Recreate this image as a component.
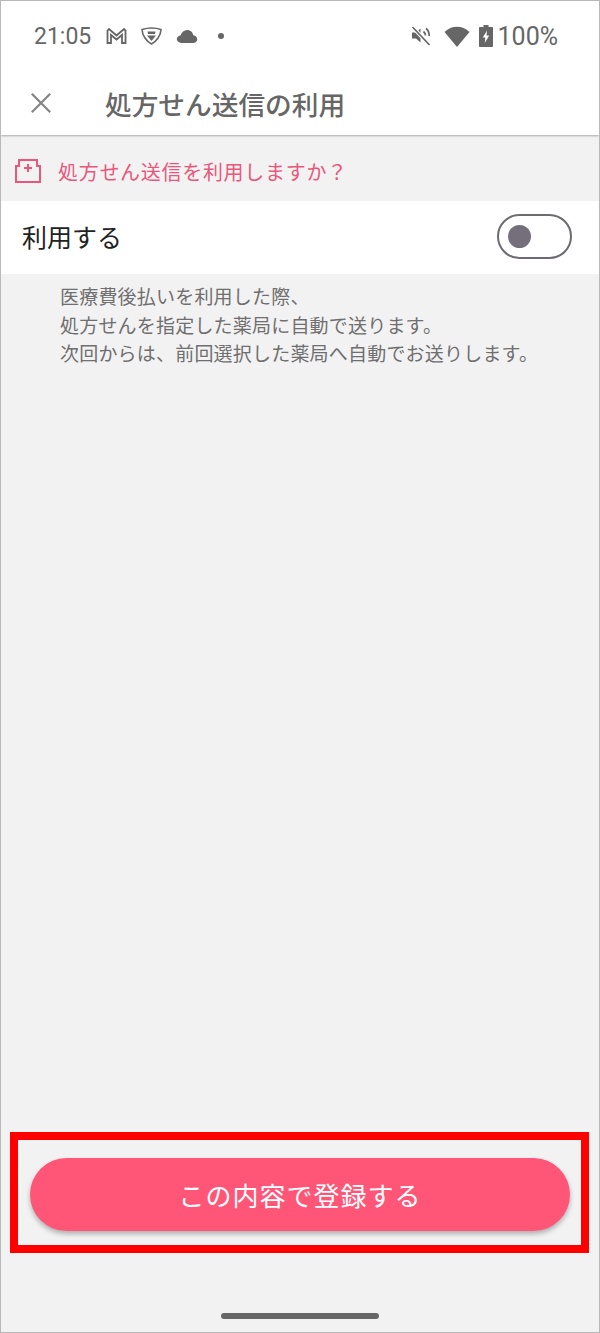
<div class="frame">
  <header class="top">
    <div class="status">
      <div class="left">
        <span class="time">21:05</span>
        <svg class="ic" width="21" height="16" viewBox="0 0 21 16" fill="none" stroke="#666" stroke-width="1.800"><path d="M1.500 15V2.500L3 1 10.500 7.500 18 1 19.500 2.500V15H16V7L10.500 11.500 5 7V15Z"/></svg>
        <svg class="ic shield" width="21" height="18" viewBox="0 0 21 18"><path d="M1 2.500C7 .6 14 .6 20 2.500 19.800 8.500 15.500 14.500 10.500 17 5.500 14.500 1.200 8.500 1 2.500Z" fill="none" stroke="#666" stroke-width="1.600"/><path d="M6.500 4.500h8l-.5 2.500h-7zM6 8.500h9l-4.500 5.500z" fill="#666"/></svg>
        <svg class="ic cloud" width="22" height="13" viewBox="0 0 22 14"><path d="M5 14C2.200 14 0 12.200 0 9.800 0 7.600 1.800 6 4 5.800 5.200 2.500 7.800 0 11.200 0 14.800 0 17.200 2.500 17.800 5.700 20.200 6 22 7.700 22 10 22 12.300 20 14 17.500 14Z" fill="#666"/></svg>
        <span class="dot"></span>
      </div>
      <div class="right">
        <svg width="20" height="22" viewBox="0 0 20 22" fill="none"><path d="M1 7.500H5L9.500 3.500V17.500L5 13.500H1Z" fill="#666"/><path d="M12.500 6.500C14 7.800 14.500 9.200 14.500 10.500M15 3.500C17.500 5.500 18.300 8 18.200 11" stroke="#666" stroke-width="1.700"/><path d="M1.500 2 18.500 20" stroke="#fff" stroke-width="4"/><path d="M1.500 2 18.500 20" stroke="#666" stroke-width="1.700"/></svg>
        <svg class="wifi" width="26" height="21" viewBox="0 0 26 21"><path d="M0.500 6C7.500 -1 18.500 -1 25.500 6L13 21Z" fill="#666"/></svg>
        <svg class="batt" width="14" height="22" viewBox="0 0 14 22"><path d="M4.500 0H9.500V2H13C13.600 2 14 2.400 14 3V21C14 21.600 13.600 22 13 22H1C.4 22 0 21.600 0 21V3C0 2.400 .4 2 1 2H4.500Z" fill="#666"/><path d="M8 5.500 3.800 12.500H6.300L5.800 18 10.200 10.500H7.500Z" fill="#fff"/></svg>
        <span class="pct">100%</span>
      </div>
    </div>
    <div class="bar">
      <svg class="close" width="20" height="20" viewBox="0 0 20 20" stroke="#858585" stroke-width="2.200" fill="none"><path d="M.8 .8 19.200 19.200M19.200 .8 .8 19.200"/></svg>
      <h1>処方せん送信の利用</h1>
    </div>
  </header>

  <div class="prompt">
    <svg width="26" height="24" viewBox="0 0 26 24" fill="none" stroke="#e9587c" stroke-width="2"><path d="M1 23V7H4V1H22V7H25V23Z"/><path d="M13 5V13M9 9H17"/></svg>
    <span>処方せん送信を利用しますか？</span>
  </div>

  <div class="row">
    <span class="label">利用する</span>
    <div class="toggle"><span class="knob"></span></div>
  </div>

  <p class="desc">医療費後払いを利用した際、<br>処方せんを指定した薬局に自動で送ります。<br>次回からは、前回選択した薬局へ自動でお送りします。</p>

  <div class="spacer"></div>

  <div class="mark">
    <button type="button">この内容で登録する</button>
  </div>

  <div class="home"><span></span></div>
</div>

<style>
  :global(body) { margin: 0; background: #f2f2f3; }
  .frame {
    box-sizing: border-box;
    width: 600px;
    height: 1333px;
    display: flex;
    flex-direction: column;
    background: #f2f2f3;
    border: 1px solid #b9b9b9;
    font-family: "Noto Sans CJK JP", "Noto Sans", sans-serif;
    overflow: hidden;
  }
  .top {
    background: #fff;
    height: 134px;
    flex: none;
    box-shadow: 0 1px 2px rgba(0,0,0,.3);
    position: relative;
    display: flex;
    flex-direction: column;
  }
  .status {
    height: 70px;
    display: flex;
    justify-content: space-between;
    align-items: center;
    padding: 0 41px 0 33px;
    color: #666;
    font-family: Roboto, sans-serif;
  }
  .left, .right { display: flex; align-items: center; }
  .time { font-size: 23px; margin-right: 15px; width: 57px; }
  .ic { flex: none; }
  .shield { margin-left: 14px; }
  .cloud { margin-left: 14px; }
  .dot { width: 6px; height: 6px; border-radius: 50%; background: #666; margin-left: 20px; }
  .wifi { margin-left: 13px; }
  .batt { margin-left: 9px; }
  .pct { font-size: 25px; margin-left: 5px; }
  .bar { display: flex; align-items: center; height: 64px; }
  .close { margin-left: 30px; flex: none; }
  h1 { margin: 0 0 0 54px; font-size: 26.700px; font-weight: 500; color: #666; line-height: 1; padding-top: 2px; }
  .prompt {
    height: 66px;
    flex: none;
    box-sizing: border-box;
    display: flex;
    align-items: center;
    padding: 4px 0 0 14px;
    color: #e9587c;
    font-size: 20px;
    letter-spacing: .7px;
  }
  .prompt svg { margin-top: 1px; }
  .prompt span { margin: 2px 0 0 17px; }
  .row {
    flex: none;
    height: 73px;
    background: #fff;
    display: flex;
    align-items: center;
    justify-content: space-between;
    padding: 0 27px 0 21px;
    font-size: 25px;
    color: #222;
  }
  .label { margin-top: -3px; }
  .toggle {
    box-sizing: border-box;
    width: 75px;
    height: 45px;
    margin-top: -2px;
    border: 2px solid #6e6a72;
    border-radius: 23px;
    display: flex;
    align-items: center;
    padding-left: 9px;
  }
  .knob { width: 23px; height: 23px; border-radius: 50%; background: #756f7c; }
  .desc {
    margin: 8px 0 0 59px;
    font-size: 19px;
    letter-spacing: .2px;
    line-height: 28.500px;
    color: #6f6f6f;
  }
  .spacer { flex: 1; }
  .mark {
    flex: none;
    box-sizing: border-box;
    margin-left: 9px;
    width: 579px;
    height: 121px;
    border: 8px solid #f00;
    padding: 18px 12px 0;
  }
  button {
    display: block;
    width: 540px;
    height: 73px;
    border: 0;
    border-radius: 37px;
    background: #ff5678;
    color: #fff;
    font: inherit;
    font-size: 26px;
    letter-spacing: 1px;
    box-shadow: 0 3px 5px rgba(0,0,0,.28);
    padding: 0;
  }
  .home { flex: none; height: 79px; box-sizing: border-box; padding-top: 60px; display: flex; justify-content: center; }
  .home span { width: 158px; height: 6px; border-radius: 3px; background: #666; }
</style>
